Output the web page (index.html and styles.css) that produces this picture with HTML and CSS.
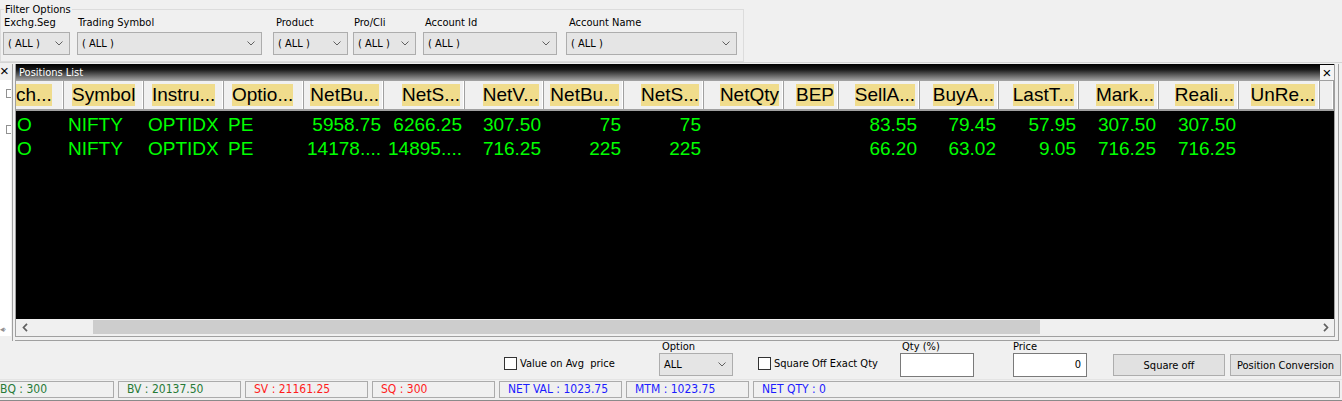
FILE: index.html
```html
<!DOCTYPE html>
<html lang="en">
<head>
    <meta charset="UTF-8">
    <title>Positions List</title>
    <link rel="stylesheet" href="styles.css">
</head>
<body>

    <fieldset class="filters">
        <legend>Filter Options</legend>
        <div class="filter f-exch">
            <label>Exchg.Seg</label>
            <div class="combo"><span>( ALL )</span><svg class="chev" width="8" height="5" viewBox="0 0 8 5"><polyline points="0.5,0.5 4,4 7.5,0.5"/></svg></div>
        </div>
        <div class="filter f-symbol">
            <label>Trading Symbol</label>
            <div class="combo"><span>( ALL )</span><svg class="chev" width="8" height="5" viewBox="0 0 8 5"><polyline points="0.5,0.5 4,4 7.5,0.5"/></svg></div>
        </div>
        <div class="filter f-product">
            <label>Product</label>
            <div class="combo"><span>( ALL )</span><svg class="chev" width="8" height="5" viewBox="0 0 8 5"><polyline points="0.5,0.5 4,4 7.5,0.5"/></svg></div>
        </div>
        <div class="filter f-procli">
            <label>Pro/Cli</label>
            <div class="combo"><span>( ALL )</span><svg class="chev" width="8" height="5" viewBox="0 0 8 5"><polyline points="0.5,0.5 4,4 7.5,0.5"/></svg></div>
        </div>
        <div class="filter f-accid">
            <label>Account Id</label>
            <div class="combo"><span>( ALL )</span><svg class="chev" width="8" height="5" viewBox="0 0 8 5"><polyline points="0.5,0.5 4,4 7.5,0.5"/></svg></div>
        </div>
        <div class="filter f-accname">
            <label>Account Name</label>
            <div class="combo"><span>( ALL )</span><svg class="chev" width="8" height="5" viewBox="0 0 8 5"><polyline points="0.5,0.5 4,4 7.5,0.5"/></svg></div>
        </div>
    </fieldset>

    <div class="workspace">
        <div class="dock-left">
            <div class="dock-close">&times;</div>
            <div class="tree">
                <div class="node"></div>
                <div class="node second"></div>
                <div class="tree-scroll">&#9666;&#8250;</div>
            </div>
        </div>
        <div class="splitter"></div>
        <div class="frame">
            <div class="window">
                <div class="titlebar">
                    <span>Positions List</span>
                    <span class="close">&times;</span>
                </div>

                <div class="cols head">
                    <div class="th l0"><span>ch...</span></div>
                    <div class="th l"><span>Symbol</span></div>
                    <div class="th l"><span>Instru...</span></div>
                    <div class="th l"><span>Optio...</span></div>
                    <div class="th"><span>NetBu...</span></div>
                    <div class="th"><span>NetS...</span></div>
                    <div class="th"><span>NetV...</span></div>
                    <div class="th"><span>NetBu...</span></div>
                    <div class="th"><span>NetS...</span></div>
                    <div class="th"><span>NetQty</span></div>
                    <div class="th"><span>BEP</span></div>
                    <div class="th"><span>SellA...</span></div>
                    <div class="th"><span>BuyA...</span></div>
                    <div class="th"><span>LastT...</span></div>
                    <div class="th"><span>Mark...</span></div>
                    <div class="th"><span>Reali...</span></div>
                    <div class="th"><span>UnRe...</span></div>
                    <div class="th"></div>
                </div>

                <div class="rows">
                    <div class="cols row">
                        <div class="td l0">O</div>
                        <div class="td l">NIFTY</div>
                        <div class="td l">OPTIDX</div>
                        <div class="td l">PE</div>
                        <div class="td">5958.75</div>
                        <div class="td">6266.25</div>
                        <div class="td">307.50</div>
                        <div class="td">75</div>
                        <div class="td">75</div>
                        <div class="td"></div>
                        <div class="td"></div>
                        <div class="td">83.55</div>
                        <div class="td">79.45</div>
                        <div class="td">57.95</div>
                        <div class="td">307.50</div>
                        <div class="td">307.50</div>
                        <div class="td"></div>
                        <div class="td"></div>
                    </div>
                    <div class="cols row">
                        <div class="td l0">O</div>
                        <div class="td l">NIFTY</div>
                        <div class="td l">OPTIDX</div>
                        <div class="td l">PE</div>
                        <div class="td">14178....</div>
                        <div class="td">14895....</div>
                        <div class="td">716.25</div>
                        <div class="td">225</div>
                        <div class="td">225</div>
                        <div class="td"></div>
                        <div class="td"></div>
                        <div class="td">66.20</div>
                        <div class="td">63.02</div>
                        <div class="td">9.05</div>
                        <div class="td">716.25</div>
                        <div class="td">716.25</div>
                        <div class="td"></div>
                        <div class="td"></div>
                    </div>
                </div>

                <div class="hscroll">
                    <div class="arrow"><svg width="6" height="9" viewBox="0 0 6 9"><polyline points="5,0.8 1.5,4.5 5,8.2"/></svg></div>
                    <div class="track">
                        <div class="thumb"></div>
                    </div>
                    <div class="arrow"><svg width="6" height="9" viewBox="0 0 6 9"><polyline points="1,0.8 4.5,4.5 1,8.2"/></svg></div>
                </div>
            </div>
        </div>
    </div>

    <div class="actions">
        <div class="check w-avg"><span class="box"></span>Value on Avg&nbsp; price</div>
        <div class="group w-option">
            <label>Option</label>
            <div class="combo small"><span>ALL</span><svg class="chev" width="8" height="5" viewBox="0 0 8 5"><polyline points="0.5,0.5 4,4 7.5,0.5"/></svg></div>
        </div>
        <div class="check w-exact"><span class="box"></span>Square Off Exact Qty</div>
        <div class="group w-qty">
            <label>Qty (%)</label>
            <div class="input"></div>
        </div>
        <div class="group w-price">
            <label>Price</label>
            <div class="input num">0</div>
        </div>
        <button class="btn w-square">Square off</button>
        <button class="btn w-conv">Position Conversion</button>
    </div>

    <div class="statusbar">
        <div class="cell first green">BQ : 300</div>
        <div class="cell green">BV : 20137.50</div>
        <div class="cell red">SV : 21161.25</div>
        <div class="cell red">SQ : 300</div>
        <div class="cell blue">NET VAL : 1023.75</div>
        <div class="cell blue">MTM : 1023.75</div>
        <div class="cell blue last">NET QTY : 0</div>
    </div>

</body>
</html>
```

FILE: styles.css
```css
body {
    margin: 0;
    width: 1342px;
    height: 401px;
    overflow: hidden;
    background-color: #f0f0f0;
    font-family: "DejaVu Sans Condensed", "DejaVu Sans", sans-serif;
    font-size: 11px;
    color: #000;
}

/* filter group box */
.filters {
    box-sizing: border-box;
    width: 744px;
    height: 59px;
    margin: 3px 0 0 0;
    padding: 0 0 0 2px;
    border: 1px solid #dcdcdc;
    display: flex;
    align-items: flex-start;
}
.filters legend {
    padding: 0 1px;
    margin-left: 1px;
    line-height: 13px;
}
.filter {
    display: flex;
    flex-direction: column;
}
.filter label {
    line-height: 14px;
    height: 15px;
    padding-left: 1px;
}
.f-exch { width: 67px; }
.f-symbol { width: 185px; margin-left: 7px; }
.f-product { width: 75px; margin-left: 11px; }
.f-product label { padding-left: 3px; }
.f-procli { width: 63px; margin-left: 5px; }
.f-accid { width: 134px; margin-left: 7px; }
.f-accid label { padding-left: 2px; }
.f-accname { width: 171px; margin-left: 9px; }
.f-accname label { padding-left: 3px; }

.combo {
    box-sizing: border-box;
    height: 23px;
    margin-top: 1px;
    border: 1px solid #adadad;
    background-color: #e5e5e5;
    display: flex;
    align-items: center;
    justify-content: space-between;
    padding: 0 6px 0 4px;
}
.chev polyline {
    fill: none;
    stroke: #606060;
    stroke-width: 1;
}

/* docked area */
.workspace {
    display: flex;
    height: 279px;
    border-top: 1px solid #d4d4d4;
    box-sizing: border-box;
    padding-top: 1px;
}
.dock-left {
    width: 12px;
    display: flex;
    flex-direction: column;
}
.dock-close {
    height: 16px;
    line-height: 14px;
    font-size: 15px;
    font-family: "Liberation Sans", sans-serif;
    padding-left: 0;
}
.tree {
    flex: 1;
    width: 11px;
    background-color: #fff;
    overflow: hidden;
    position: relative;
    margin-bottom: 5px;
}
.node {
    width: 7px;
    height: 7px;
    border: 1px solid #919191;
    margin: 9px 0 0 6px;
}
.node.second {
    margin-top: 27px;
}
.tree-scroll {
    position: absolute;
    bottom: 2px;
    left: 0;
    font-size: 9px;
    color: #909090;
    letter-spacing: -1px;
}
.splitter {
    width: 2px;
    border-left: 1px solid #a0a0a0;
}
.frame {
    border-right: 1px solid #a0a0a0;
    border-bottom: 1px solid #a0a0a0;
    padding: 0 3px 3px 0;
}
.window {
    width: 1318px;
    border-left: 1px solid #a0a0a0;
    border-right: 1px solid #a0a0a0;
    border-bottom: 1px solid #a0a0a0;
}
.titlebar {
    height: 16px;
    background: linear-gradient(to bottom, #000 0%, #1a1a1a 35%, #9c9c9c 100%);
    display: flex;
    justify-content: space-between;
    align-items: center;
    color: #fff;
    padding-left: 3px;
}
.titlebar .close {
    width: 14px;
    height: 15px;
    margin-top: 1px;
    background-color: #f4f4f4;
    color: #000;
    text-align: center;
    line-height: 15px;
    font-size: 15px;
    font-family: "Liberation Sans", sans-serif;
}

/* grid */
.cols {
    display: grid;
    grid-template-columns: 48px 80px 80px 80px 80px 81px 79px 80px 80px 80px 55px 81px 79px 80px 80px 80px 81px 14px;
    font-family: "Liberation Sans", Arial, sans-serif;
    font-size: 19px;
}
.head {
    height: 31px;
    box-sizing: border-box;
    border-top: 1px solid #a0a0a0;
    border-bottom: 2px solid #a0a0a0;
    background-color: #f0f0f0;
}
.th {
    text-align: right;
    padding: 3px 5px 0 0;
    box-shadow: inset -1px 0 #a0a0a0, inset -2px 0 #fff;
    white-space: nowrap;
    overflow: hidden;
}
.th span {
    background-color: #f0dc8c;
    line-height: 22px;
    display: inline-block;
}
.th.l { text-align: left; padding-left: 8px; }
.th.l0 { text-align: left; padding-left: 0; }

.rows {
    height: 208px;
    box-sizing: border-box;
    padding-top: 2px;
    background-color: #000;
}
.row {
    line-height: 24px;
    color: #00ff00;
}
.td {
    text-align: right;
    padding-right: 3px;
    white-space: nowrap;
    overflow: hidden;
}
.td.l { text-align: left; padding-left: 4px; }
.td.l0 { text-align: left; padding-left: 1px; }

.hscroll {
    height: 17px;
    display: flex;
    background-color: #f0f0f0;
}
.hscroll .arrow {
    width: 17px;
    display: flex;
    align-items: center;
    justify-content: center;
}
.hscroll polyline {
    fill: none;
    stroke: #606060;
    stroke-width: 1.7;
}
.track {
    flex: 1;
    padding: 1px 0 2px 60px;
}
.thumb {
    width: 947px;
    height: 100%;
    background-color: #cdcdcd;
}

/* bottom actions */
.actions {
    height: 38px;
    display: flex;
    align-items: flex-start;
    padding-left: 504px;
}
.check {
    margin-top: 16px;
    display: flex;
    align-items: center;
    line-height: 13px;
}
.check .box {
    width: 11px;
    height: 11px;
    border: 1px solid #333;
    background-color: #fff;
    margin-right: 3px;
}
.w-avg { width: 155px; }
.w-exact { width: 142px; }
.group {
    display: flex;
    flex-direction: column;
}
.group label {
    line-height: 12px;
    height: 12px;
    padding-left: 2px;
}
.group .combo { margin-top: 0; }
.w-option { width: 99px; }
.w-option .combo { width: 74px; padding-left: 4px; }
.w-option label { padding-left: 3px; }
.w-qty { width: 113px; }
.w-price { width: 100px; }
.w-price label { padding-left: 0; }
.input {
    box-sizing: border-box;
    width: 74px;
    height: 24px;
    border: 1px solid #7a7a7a;
    background-color: #fff;
    line-height: 22px;
    padding-right: 5px;
}
.input.num { text-align: right; }
.btn {
    box-sizing: border-box;
    margin-top: 13px;
    height: 22px;
    border: 1px solid #adadad;
    background-color: #e1e1e1;
    font-family: inherit;
    font-size: 11px;
    padding: 0;
}
.w-square { width: 112px; margin-right: 5px; }
.w-conv { width: 111px; }

/* status bar */
.statusbar {
    height: 22px;
    box-sizing: border-box;
    border-top: 1px solid #e4e4e4;
    border-bottom: 1px solid #8a8a8a;
    display: flex;
    gap: 4px;
    padding-top: 1px;
    font-size: 12px;
}
.cell {
    box-sizing: border-box;
    width: 123px;
    height: 17px;
    line-height: 15px;
    border: 1px solid #ababab;
    padding-left: 8px;
    white-space: nowrap;
}
.cell.first { margin-left: -9px; }
.cell.last { flex: 1; margin-right: 2px; }
.green { color: #277a37; }
.red { color: #ff1c1c; }
.blue { color: #1c1cff; }
```
